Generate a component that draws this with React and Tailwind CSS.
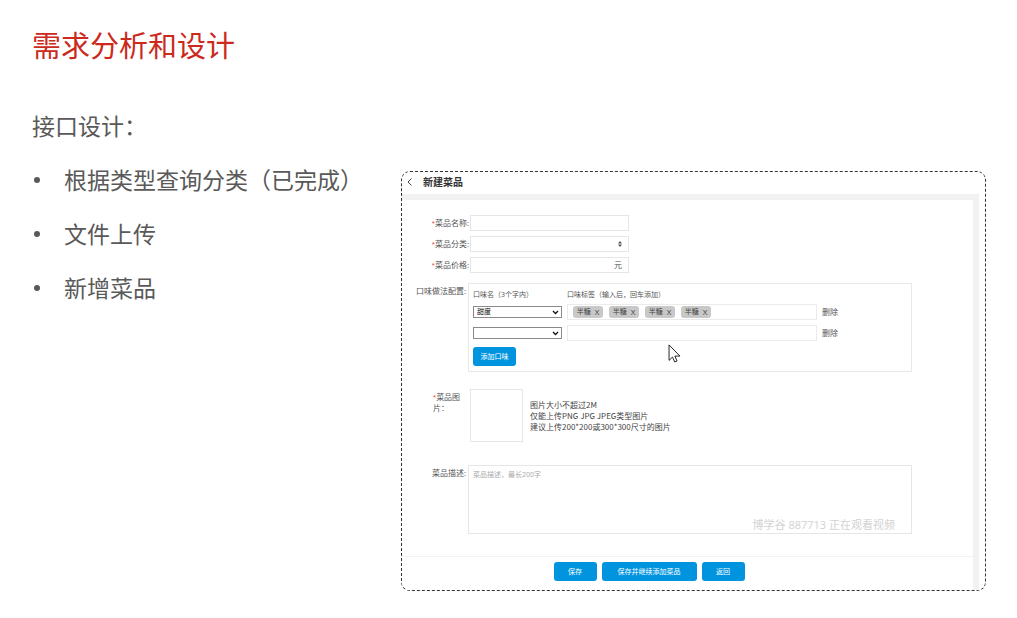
import { useState } from "react";

const inputBox = "h-4 w-full border border-[#e6e6e6] bg-white px-1 text-[8px] leading-[14px] text-[#555] outline-none";
const primaryButton =
  "flex h-[19px] items-center justify-center rounded-[3px] bg-[#0094df] text-[7px] leading-[10px] text-white";

function Star() {
  return <span className="font-['Liberation_Sans',sans-serif] text-[#f0493f]">*</span>;
}

function Label({ htmlFor, required, children }) {
  return (
    <label htmlFor={htmlFor} className="pr-px text-right text-[8px] leading-[10px] whitespace-nowrap">
      {required && <Star />}
      {children}
    </label>
  );
}

function FlavorRow({ id, options, tags }) {
  return (
    <div className="flex gap-[5px]">
      <div className="relative h-3 w-[89px] shrink-0 self-center">
        <select
          id={id}
          aria-label="口味名"
          className="block h-3 w-full appearance-none border border-[#8a8a8a] bg-white pl-[3px] text-[7px] leading-[10px] text-black outline-none"
        >
          {options.map((o) => (
            <option key={o}>{o}</option>
          ))}
        </select>
        <svg className="pointer-events-none absolute top-[4px] right-[3px] h-[5px] w-[7px]" viewBox="0 0 7 5" fill="none" stroke="#111" strokeWidth="1.3">
          <path d="M1 1l2.5 2.5L6 1" />
        </svg>
      </div>
      <div className="flex h-4 min-w-0 flex-1 items-center gap-[6px] border border-[#ebebeb] px-[5px]">
        {tags.map((t, i) => (
          <button
            key={i}
            type="button"
            className="flex h-3 w-[30px] shrink-0 items-center justify-center gap-1 rounded-[3px] bg-[#c8c8c8] text-[7px] leading-3 text-[#444]"
          >
            <span>{t}</span>
            <span className="text-[8px]">X</span>
          </button>
        ))}
        <input aria-label="口味标签" className="h-3 min-w-0 flex-1 text-[7px] outline-none" />
      </div>
      <button type="button" className="w-4 shrink-0 text-left text-[8px] leading-4 whitespace-nowrap">
        删除
      </button>
    </div>
  );
}

export default function App() {
  const [desc, setDesc] = useState("");
  return (
    <div className="min-h-screen bg-white pb-[27px] font-['Open_Sans','Noto_Sans_CJK_SC',sans-serif] text-[#595959]">
      <h1 className="px-8 pt-[26px] text-[29px] leading-10 text-[#cb2a1c]">需求分析和设计</h1>
      <main className="flex pt-[33px] pr-[31px]">
        <section className="w-[401px] shrink-0 pl-8 text-[23px] leading-[54px]">
          <p>接口设计：</p>
          <ul>
            {["根据类型查询分类（已完成）", "文件上传", "新增菜品"].map((t) => (
              <li key={t} className="flex items-center gap-[22px]">
                <span className="mx-[2px] size-[6px] rounded-full bg-[#595959]" />
                {t}
              </li>
            ))}
          </ul>
        </section>

        <section className="relative mt-[72px] min-w-0 flex-1 overflow-hidden rounded-[9px] border border-dashed border-[#333] text-[#555]">
          <header className="flex h-[22px] items-center gap-[10px] pb-[2px] pl-[5px]">
            <button type="button" aria-label="返回" className="flex">
              <svg className="h-[8px] w-[6px]" viewBox="0 0 6 8" fill="none" stroke="#444" strokeWidth="1">
                <path d="M4.5 .5L1 4l3.5 3.5" />
              </svg>
            </button>
            <h2 className="text-[10px] leading-[14px] font-bold text-[#333]">新建菜品</h2>
          </header>

          <div className="mr-[6px] bg-[#f2f2f2] pt-[6px] pr-[6px]">
            <form className="bg-white" onSubmit={(e) => e.preventDefault()}>
              <div className="grid grid-cols-[66px_1fr] pt-[15px] pr-[61px] pb-[22px]">
                <div className="col-span-2 grid grid-cols-[68px_159px] items-center gap-y-[5px]">
                  <Label htmlFor="name" required>菜品名称:</Label>
                  <input id="name" className={inputBox} />
                  <Label htmlFor="category" required>菜品分类:</Label>
                  <div className="relative">
                    <select id="category" className={`${inputBox} block appearance-none`}>
                      <option></option>
                    </select>
                    <svg className="pointer-events-none absolute top-[5px] right-[7px] h-[6px] w-[4px]" viewBox="0 0 4 6" fill="#555">
                      <path d="M2 0l2 2.4H0zM2 6l2-2.4H0z" />
                    </svg>
                  </div>
                  <Label htmlFor="price" required>菜品价格:</Label>
                  <div className="flex h-4 items-center border border-[#e6e6e6] pr-[6px]">
                    <input id="price" className="h-3 min-w-0 flex-1 px-1 text-[8px] outline-none" />
                    <span className="text-[8px] leading-[10px]">元</span>
                  </div>
                </div>

                <div className="mt-[13px] pr-[2px] text-right text-[8px] leading-[10px] whitespace-nowrap">口味做法配置:</div>
                <fieldset className="mt-[10px] h-[89px] border border-[#e8e8e8] pt-[6px] pr-[73px] pl-1">
                  <div className="flex h-[10px] text-[7px] leading-[10px]">
                    <span className="w-[94px]">口味名（3个字内）</span>
                    <span>口味标签（输入后，回车添加）</span>
                  </div>
                  <div className="mt-1 flex flex-col gap-[5px]">
                    <FlavorRow id="flavor1" options={["甜度"]} tags={["半糖", "半糖", "半糖", "半糖"]} />
                    <FlavorRow id="flavor2" options={[""]} tags={[]} />
                  </div>
                  <button type="button" className={`${primaryButton} mt-[6px] w-[43px]`}>添加口味</button>
                </fieldset>

                <label htmlFor="photo" className="mt-5 ml-[31px] text-[8px] leading-[10px] whitespace-nowrap">
                  <Star />菜品图
                  <br />
                  片：
                </label>
                <div className="mt-[17px] flex items-center gap-[7px] pl-[2px]">
                  <button id="photo" type="button" aria-label="菜品图片" className="size-[53px] shrink-0 border border-[#e6e6e6]" />
                  <p className="font-['Noto_Sans_CJK_SC',sans-serif] text-[8px] leading-[11px] text-[#444]">
                    图片大小不超过2M
                    <br />
                    仅能上传PNG JPG JPEG类型图片
                    <br />
                    建议上传200*200或300*300尺寸的图片
                  </p>
                </div>

                <label htmlFor="desc" className="mt-[26px] pr-[2px] text-right text-[8px] leading-[10px] whitespace-nowrap">菜品描述:</label>
                <div className="relative mt-[23px]">
                  <textarea
                    id="desc"
                    value={desc}
                    onChange={(e) => setDesc(e.target.value)}
                    placeholder="菜品描述，最长200字"
                    className="block h-[69px] w-full resize-none border border-[#e6e6e6] px-1 py-[3px] text-[7px] leading-[11px] outline-none placeholder:text-[#aaa]"
                  />
                  <span className="pointer-events-none absolute right-[17px] bottom-[2px] text-[11px] leading-[14px] whitespace-nowrap text-[#d2d2d2]">
                    博学谷 887713 正在观看视频
                  </span>
                </div>
              </div>

              <footer className="flex justify-center gap-[5px] border-t border-[#f2f2f2] pt-[5px] pr-[77px] pb-[9px]">
                <button type="submit" className={`${primaryButton} w-[43px]`}>保存</button>
                <button type="button" className={`${primaryButton} w-[95px]`}>保存并继续添加菜品</button>
                <button type="button" className={`${primaryButton} w-[43px]`}>返回</button>
              </footer>
            </form>
          </div>

          <svg className="pointer-events-none absolute top-[172px] left-[266px] h-[20px] w-[13px]" viewBox="0 0 14 22" fill="#fff" stroke="#111" strokeWidth="1">
            <path d="M1 1v17l3.8-3.6 2.4 5.4 2.6-1.1-2.4-5.4H13z" />
          </svg>
        </section>
      </main>
    </div>
  );
}
